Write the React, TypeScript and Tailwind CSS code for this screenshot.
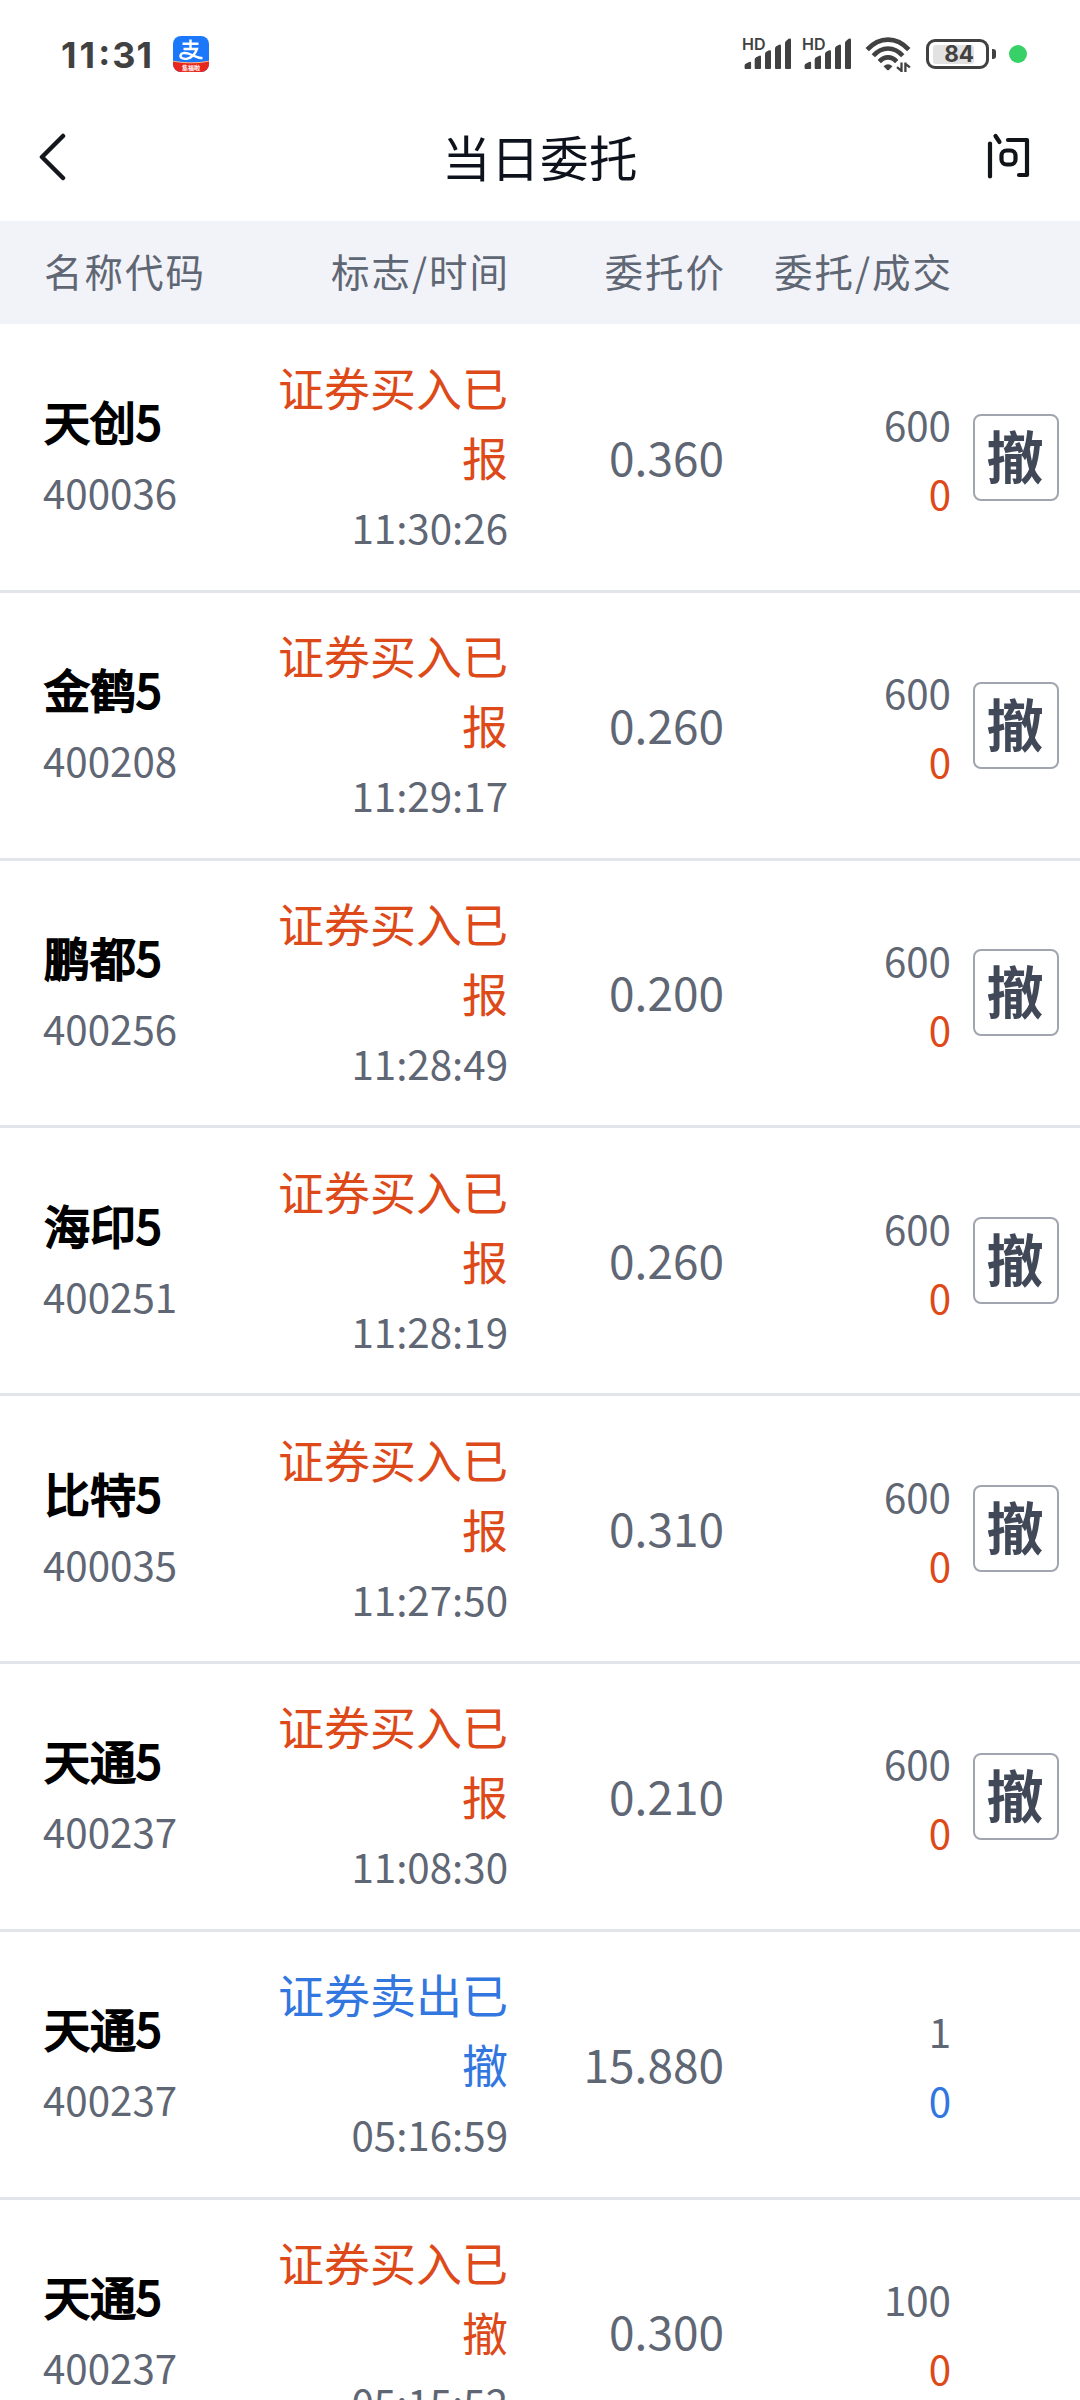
type Order = {
  name: string;
  code: string;
  status: string;
  time: string;
  price: string;
  amount: string;
  side: "buy" | "sell";
  cancelable: boolean;
};

const orders: Order[] = [
  { name: "天创5", code: "400036", status: "证券买入已报", time: "11:30:26", price: "0.360", amount: "600", side: "buy", cancelable: true },
  { name: "金鹤5", code: "400208", status: "证券买入已报", time: "11:29:17", price: "0.260", amount: "600", side: "buy", cancelable: true },
  { name: "鹏都5", code: "400256", status: "证券买入已报", time: "11:28:49", price: "0.200", amount: "600", side: "buy", cancelable: true },
  { name: "海印5", code: "400251", status: "证券买入已报", time: "11:28:19", price: "0.260", amount: "600", side: "buy", cancelable: true },
  { name: "比特5", code: "400035", status: "证券买入已报", time: "11:27:50", price: "0.310", amount: "600", side: "buy", cancelable: true },
  { name: "天通5", code: "400237", status: "证券买入已报", time: "11:08:30", price: "0.210", amount: "600", side: "buy", cancelable: true },
  { name: "天通5", code: "400237", status: "证券卖出已撤", time: "05:16:59", price: "15.880", amount: "1", side: "sell", cancelable: false },
  { name: "天通5", code: "400237", status: "证券买入已撤", time: "05:15:52", price: "0.300", amount: "100", side: "buy", cancelable: false },
];

function PayAppIcon() {
  return (
    <svg width="36" height="36" viewBox="0 0 36 36" fill="none">
      <defs>
        <clipPath id="app-icon">
          <rect width="36" height="36" rx="8" />
        </clipPath>
      </defs>
      <g clipPath="url(#app-icon)">
        <rect width="36" height="36" fill="#1b78fb" />
        <path
          d="M9.500 7.800h16M17.500 3.500v9.500M10.500 13h13.400c-1.600 4.600-5 8.600-9.500 9.600-4 .8-7.200-.7-6.900-3 .4-2.600 4.300-3.200 8-1.900 4.200 1.400 8.500 4 14 4.600"
          stroke="#fff"
          strokeWidth="2.400"
        />
        <path d="M0 25.500Q18 28.500 36 25.500V36H0Z" fill="#e8281e" />
        <path d="M0 25.200Q18 28.500 36 25.200" stroke="#ffb27a" strokeWidth="1" />
        <text x="18" y="33.500" textAnchor="middle" fontSize="6" fontWeight="700" fill="#fff">
          集福啦
        </text>
      </g>
    </svg>
  );
}

function Signal() {
  return (
    <div className="w-[50px] text-[#414141]">
      <div className="-mb-[17px] h-[17px] font-['Inter',sans-serif] text-[16px] leading-[15px] font-semibold">HD</div>
      <svg width="50" height="34" viewBox="0 0 50 34" fill="currentColor">
        <path d="M2.600 31v-2.500q0-1.500 1.500-2l3-1.400q2-.8 2 .9v5q0 1-1 1H3.600q-1 0-1-1Z" />
        <path d="M12.700 31v-8.500q0-1.500 1.500-2.200l2.600-1.400q2.200-.9 2.200.9V31q0 1-1 1h-4.300q-1 0-1-1Z" />
        <path d="M23 31V17q0-1.500 1.300-2.200l2.300-1.300q2.400-1 2.400 1V31q0 1-1 1h-4q-1 0-1-1Z" />
        <path d="M33 31V11.500q0-1.500 1.300-2.200l2.300-1.400q2.400-1 2.400 1V31q0 1-1 1h-4q-1 0-1-1Z" />
        <path d="M43 31V6q0-1.500 1.300-2.300l2.300-1.900Q49 .7 49 2.800V31q0 1-1 1h-4q-1 0-1-1Z" />
      </svg>
    </div>
  );
}

function Wifi() {
  return (
    <svg width="46" height="35" viewBox="0 0 46 35" fill="none" stroke="#414141">
      <path d="M2.200 12.600Q11.500 2.600 23 2.600t20.800 10" strokeWidth="4.600" />
      <path d="M8.300 18.700Q15 11.500 23 11.500t14.700 7.200" strokeWidth="4.600" />
      <path d="M14.300 24.600Q18.200 20.400 23 20.400t8.700 4.200" strokeWidth="4.600" />
      <path d="M18.500 29.200q4.500-3.800 9 0l-3.400 3.500q-1.100 1-2.200 0Z" fill="#414141" stroke="none" />
      <path d="M36.500 25.500v9.500M36.500 33.800l-4.500-3.600M40.400 35v-9.500M40.400 26.800l4.500 3.600" strokeWidth="2.300" />
    </svg>
  );
}

function Battery() {
  return (
    <div className="flex items-center">
      <div className="flex h-[30px] w-[63px] items-center rounded-[9px] border-[3px] border-[#414141] px-1">
        <div className="flex h-[19px] w-[41px] items-center justify-end rounded-[3px] bg-[#e2e2e2] font-['Inter',sans-serif] text-[22.500px] leading-none font-bold text-[#414141]">
          84
        </div>
      </div>
      <div className="ml-[3px] h-[10px] w-[4px] rounded-r-[3px] bg-[#414141]" />
    </div>
  );
}

function StatusBar() {
  return (
    <div className="flex h-[108px] items-center pr-[53px] pl-[61px]">
      <div className="flex w-[92px] items-center justify-between pt-[2px] font-['Inter',sans-serif] text-[36px] leading-none font-bold text-[#414141]">
        <span className="tracking-[3px]">11</span>
        <span className="-ml-[2px] -translate-y-[3px]">:</span>
        <span className="tracking-[1px]">31</span>
      </div>
      <div className="ml-[20px]">
        <PayAppIcon />
      </div>
      <div className="ml-auto flex items-center">
        <Signal />
        <div className="ml-[10px]">
          <Signal />
        </div>
        <div className="ml-[13px]">
          <Wifi />
        </div>
        <div className="ml-[15px]">
          <Battery />
        </div>
        <div className="ml-[13px] size-[18px] rounded-full bg-[#37d167]" />
      </div>
    </div>
  );
}

function NavBar() {
  return (
    <header className="flex h-[113px] items-start justify-between pr-[49px] pl-[39px]">
      <button className="mt-[25px] w-[46px]">
        <svg width="28" height="48" viewBox="0 0 28 48" fill="none" stroke="#14171c" strokeWidth="4.500" strokeLinecap="round" strokeLinejoin="round">
          <path d="M24 3 3 24l21 21" />
        </svg>
      </button>
      <h1 className="mt-[12px] ml-[8px] text-[48.500px] leading-[72px] tracking-[0.500px] text-[#0d121c]">当日委托</h1>
      <button className="mt-[23px]">
        <svg width="44" height="48" viewBox="0 0 44 48" fill="none" stroke="#11151a" strokeWidth="4.200" strokeLinecap="round" strokeLinejoin="round">
          <path d="M3 12.500v33" />
          <path d="M8.500 5l4 6" />
          <path d="M21 9h19v35h-8" />
          <rect x="14.500" y="19.500" width="14" height="14" rx="5" />
        </svg>
      </button>
    </header>
  );
}

const columns = "grid grid-cols-[224px_240px_216px_227px_129px] pl-[44px]";

function OrderRow({ order }: { order: Order }) {
  const color = order.side === "buy" ? "text-[#dd4918]" : "text-[#3276e0]";

  return (
    <li className={`${columns} h-[267.800px] items-center border-b-[3px] border-[#e2e6ea] text-[#5f6674]`}>
      <div>
        <p className="text-[46px] leading-[70px] text-black [-webkit-text-stroke:2px_black]">{order.name}</p>
        <p className="-ml-[1px] text-[40.300px] leading-[74px]">{order.code}</p>
      </div>
      <div className="text-right">
        <p className={`text-[46px] leading-[70px] ${color}`}>{order.status}</p>
        <p className="text-[40.300px] leading-[72px]">{order.time}</p>
      </div>
      <p className="pb-[3px] text-right text-[46px] leading-[70px]">{order.price}</p>
      <div className="pt-[2px] text-right text-[40.300px] leading-[69px]">
        <p>{order.amount}</p>
        <p className={color}>0</p>
      </div>
      {order.cancelable && (
        <button className="ml-[22px] h-[87px] w-[86px] rounded-[8px] border-2 border-[#a0a5af] pr-[2px] pb-[7px] text-[57px] leading-[74px] font-bold text-[#414959]">
          撤
        </button>
      )}
    </li>
  );
}

export default function App() {
  return (
    <div className="h-[2400px] w-[1080px] overflow-hidden bg-white font-['Noto_Sans_CJK_SC',sans-serif]">
      <StatusBar />
      <NavBar />
      <div className={`${columns} h-[103px] items-center bg-[#f2f3f8] pb-[4px] text-[38.500px] tracking-[2px] text-[#5f6674]`}>
        <span>名称代码</span>
        <span className="-mr-[2px] text-right">标志/时间</span>
        <span className="-mr-[2px] text-right">委托价</span>
        <span className="-mr-[2px] text-right">委托/成交</span>
      </div>
      <ul className="pt-px">
        {orders.map((order, i) => (
          <OrderRow key={i} order={order} />
        ))}
      </ul>
    </div>
  );
}
